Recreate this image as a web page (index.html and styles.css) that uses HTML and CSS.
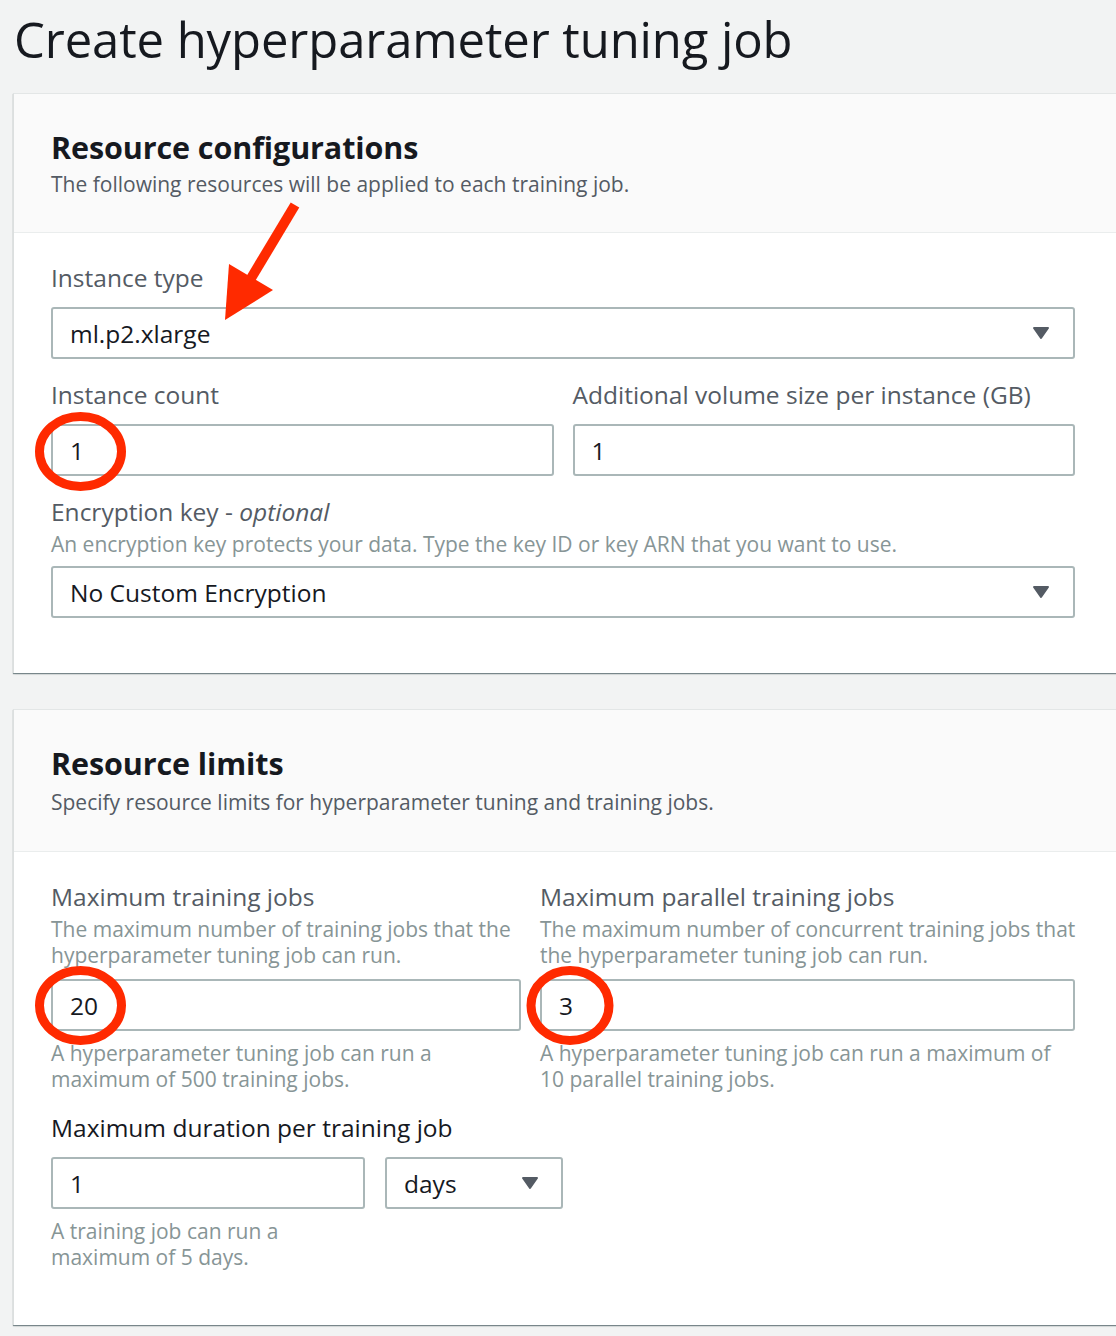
FILE: index.html
```html
<!DOCTYPE html>
<html lang="en">
<head>
<meta charset="utf-8">
<title>Create hyperparameter tuning job</title>
<link rel="stylesheet" href="styles.css">
</head>
<body>
<div class="page">
  <h1 class="page-title">Create hyperparameter tuning job</h1>

  <section class="panel">
    <header class="panel-header">
      <h2 class="panel-title">Resource configurations</h2>
      <p class="panel-desc">The following resources will be applied to each training job.</p>
    </header>
    <div class="panel-body">
      <div class="field">
        <label class="label">Instance type</label>
        <div class="control select">
          <span>ml.p2.xlarge</span>
          <svg class="caret" width="18" height="14" viewBox="0 0 18 14"><path d="M2 2 H16 L9 12 Z" fill="#545b64" stroke="#545b64" stroke-width="2" stroke-linejoin="round"/></svg>
        </div>
      </div>
      <div class="row-2">
        <div class="field">
          <label class="label">Instance count</label>
          <div class="control"><span>1</span></div>
        </div>
        <div class="field">
          <label class="label">Additional volume size per instance (GB)</label>
          <div class="control"><span>1</span></div>
        </div>
      </div>
      <div class="field">
        <label class="label">Encryption key - <i>optional</i></label>
        <p class="desc desc-tight">An encryption key protects your data. Type the key ID or key ARN that you want to use.</p>
        <div class="control select">
          <span>No Custom Encryption</span>
          <svg class="caret" width="18" height="14" viewBox="0 0 18 14"><path d="M2 2 H16 L9 12 Z" fill="#545b64" stroke="#545b64" stroke-width="2" stroke-linejoin="round"/></svg>
        </div>
      </div>
    </div>
  </section>

  <section class="panel">
    <header class="panel-header panel-header-tall">
      <h2 class="panel-title">Resource limits</h2>
      <p class="panel-desc">Specify resource limits for hyperparameter tuning and training jobs.</p>
    </header>
    <div class="panel-body">
      <div class="row-limits">
        <div class="field">
          <label class="label">Maximum training jobs</label>
          <p class="desc">The maximum number of training jobs that the<br>hyperparameter tuning job can run.</p>
          <div class="control"><span>20</span></div>
          <p class="hint">A hyperparameter tuning job can run a<br>maximum of 500 training jobs.</p>
        </div>
        <div class="field">
          <label class="label">Maximum parallel training jobs</label>
          <p class="desc">The maximum number of concurrent training jobs that<br>the hyperparameter tuning job can run.</p>
          <div class="control"><span>3</span></div>
          <p class="hint">A hyperparameter tuning job can run a maximum of<br>10 parallel training jobs.</p>
        </div>
      </div>
      <div class="field">
        <label class="label label-dark">Maximum duration per training job</label>
        <div class="duration">
          <div class="duration-value">
            <div class="control"><span>1</span></div>
            <p class="hint">A training job can run a<br>maximum of 5 days.</p>
          </div>
          <div class="control select unit">
            <span>days</span>
            <svg class="caret" width="18" height="14" viewBox="0 0 18 14"><path d="M2 2 H16 L9 12 Z" fill="#545b64" stroke="#545b64" stroke-width="2" stroke-linejoin="round"/></svg>
          </div>
        </div>
      </div>
    </div>
  </section>

  <svg class="annotations" width="1116" height="1336" viewBox="0 0 1116 1336">
    <g fill="none" stroke="#ff2a00" stroke-width="9">
      <ellipse cx="80.5" cy="451.5" rx="41" ry="35"/>
      <ellipse cx="80.5" cy="1005.5" rx="41" ry="35"/>
      <ellipse cx="570" cy="1005.5" rx="39" ry="35"/>
    </g>
    <line x1="295" y1="205" x2="250" y2="280" stroke="#ff2a00" stroke-width="10"/>
    <polygon points="225,320 229,264 273,290" fill="#ff2a00"/>
  </svg>
</div>
</body>
</html>
```

FILE: styles.css
```css
html, body {
  margin: 0;
  padding: 0;
}

body {
  background: #f2f3f3;
  font-family: "Open Sans", "Liberation Sans", sans-serif;
  color: #16191f;
  overflow: hidden;
}

.page {
  position: relative;
  width: 1116px;
  height: 1336px;
  padding-left: 13px;
  box-sizing: border-box;
}

.page-title {
  margin: 0;
  padding: 8px 0 0 1px;
  height: 93px;
  box-sizing: border-box;
  font-size: 49px;
  line-height: 62px;
  font-weight: 400;
  color: #16191f;
  letter-spacing: -0.1px;
}

.panel {
  width: 1140px;
  background: #fff;
  border-top: 1px solid #e3e6e6;
  border-left: 1px solid #dcdfdf;
  box-shadow: 0 1px 1px 0 rgba(0, 28, 36, 0.45), 0 2px 2px -1px rgba(0, 28, 36, 0.15);
  margin-bottom: 36px;
}

.panel-header {
  background: #fafafa;
  border-bottom: 1px solid #eaeded;
  padding: 35px 37px 35px 37px;
}

.panel-header-tall {
  padding-bottom: 36px;
}

.panel-header-tall .panel-desc {
  margin-top: 8px;
}

.panel-title {
  margin: 0;
  font-size: 30.5px;
  line-height: 36px;
  font-weight: 700;
  color: #16191f;
  letter-spacing: -0.1px;
}

.panel-desc {
  margin: 6px 0 0;
  font-size: 21px;
  line-height: 26px;
  color: #545b64;
}

.panel-body {
  width: 1024px;
  padding: 31px 37px 55px 37px;
  display: flex;
  flex-direction: column;
  gap: 22px;
}

.field {
  display: flex;
  flex-direction: column;
  min-width: 0;
}

.label {
  font-size: 24.5px;
  line-height: 28px;
  color: #545b64;
  margin-bottom: 15px;
}

.label-dark {
  color: #16191f;
}

.label i {
  font-style: italic;
}

.desc {
  margin: -10px 0 11px;
  font-size: 21px;
  line-height: 26px;
  color: #879596;
  white-space: nowrap;
}

.desc-tight {
  margin-bottom: 9px;
}

.hint {
  margin: 9px 0 0;
  font-size: 21px;
  line-height: 26px;
  color: #879596;
  white-space: nowrap;
}

.control {
  height: 52px;
  box-sizing: border-box;
  border: 2px solid #aab7b8;
  border-radius: 3px;
  background: #fff;
  display: flex;
  align-items: center;
  padding: 0 18px 0 17px;
  font-size: 24.5px;
  color: #16191f;
}

.select {
  justify-content: space-between;
  padding-right: 23px;
}

.caret {
  display: block;
  flex: none;
}

.row-2 {
  display: grid;
  grid-template-columns: 1fr 1fr;
  column-gap: 19px;
}

.row-limits {
  display: grid;
  grid-template-columns: 470px 535px;
  column-gap: 19px;
}

.duration {
  display: flex;
  gap: 20px;
  align-items: flex-start;
}

.duration-value {
  width: 314px;
  display: flex;
  flex-direction: column;
}

.unit {
  width: 178px;
  padding-right: 22px;
}

.annotations {
  position: absolute;
  left: 0;
  top: 0;
  pointer-events: none;
}
```
